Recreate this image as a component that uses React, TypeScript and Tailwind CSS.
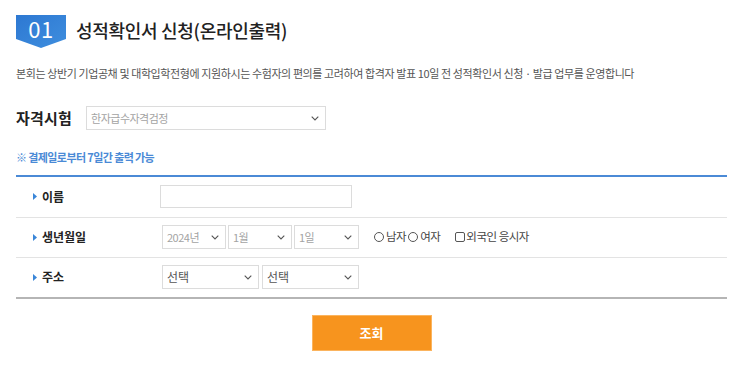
import { useState } from 'react'

const FONT = { fontFamily: '"Noto Sans CJK KR", "Noto Sans", sans-serif' }

function Chevron() {
  return (
    <svg width="8" height="5" viewBox="0 0 8 5" className="shrink-0">
      <path d="M0.7 0.7 L4 4 L7.3 0.7" fill="none" stroke="#555" strokeWidth="1.1" />
    </svg>
  )
}

function FakeSelect({ value, width, muted }: { value: string; width: string; muted?: boolean }) {
  return (
    <div
      className={`${width} h-[24px] flex items-center justify-between pl-[4px] pr-[6px] border border-[#dcdcdc] bg-white`}
    >
      <span className={muted ? 'text-[11px] text-[#a3a3a3] tracking-[-0.5px]' : 'text-[12px] text-[#555]'}>
        {value}
      </span>
      <Chevron />
    </div>
  )
}

function RowLabel({ children }: { children: string }) {
  return (
    <div className="w-[144px] shrink-0 flex items-center pl-[17px] gap-[5px]">
      <svg width="4" height="7" viewBox="0 0 4 7">
        <path d="M0 0 L4 3.5 L0 7 Z" fill="#3a86d8" />
      </svg>
      <span className="text-[12px] font-bold text-[#222]">{children}</span>
    </div>
  )
}

export default function App() {
  const [name, setName] = useState('')

  return (
    <div className="w-[743px] h-[373px] bg-white px-[16px] pt-[15px]" style={FONT}>
      {/* Title */}
      <div className="flex items-start gap-[10px]">
        <div
          className="w-[50px] h-[33px] flex justify-center pt-[1px] bg-gradient-to-br from-[#2d78d2] to-[#3f8ede] [clip-path:polygon(0_0,100%_0,100%_73%,50%_100%,0_73%)]"
        >
          <span className="text-[22px] leading-[24px] text-white font-normal tracking-[0.5px]">01</span>
        </div>
        <h1 className="text-[18px] leading-[33px] -mt-[1px] font-medium text-[#222] tracking-[-0.3px]">
          성적확인서 신청(온라인출력)
        </h1>
      </div>

      {/* Description */}
      <p className="mt-[17px] text-[11px] leading-[16px] text-[#555] tracking-[-0.4px]">
        본회는 상반기 기업공채 및 대학입학전형에 지원하시는 수험자의 편의를 고려하여 합격자 발표 10일 전 성적확인서 신청 · 발급 업무를 운영합니다
      </p>

      {/* Exam select */}
      <div className="mt-[25px] flex items-center gap-[14px]">
        <span className="text-[15px] font-bold text-[#222] tracking-[0.2px]">자격시험</span>
        <FakeSelect value="한자급수자격검정" width="w-[240px]" muted />
      </div>

      <p className="mt-[19px] text-[11px] font-bold text-[#4a8ad6] tracking-[-0.6px]">
        ※ 결제일로부터 7일간 출력 가능
      </p>

      {/* Form table */}
      <div className="mt-[9px] border-t-2 border-[#4b8ad6] border-b-2 border-b-[#b5b5b5]">
        <div className="h-[41px] flex items-center border-b border-[#e3e3e3]">
          <RowLabel>이름</RowLabel>
          <input
            value={name}
            onChange={e => setName(e.target.value)}
            className="w-[192px] h-[23px] border border-[#dcdcdc] outline-none px-[4px] text-[12px]"
          />
        </div>
        <div className="h-[40px] flex items-center border-b border-[#e3e3e3]">
          <RowLabel>생년월일</RowLabel>
          <div className="flex gap-[2px] ml-[2px]">
            <FakeSelect value="2024년" width="w-[64px]" muted />
            <FakeSelect value="1월" width="w-[64px]" muted />
            <FakeSelect value="1일" width="w-[65px]" muted />
          </div>
          <div className="ml-[15px] flex items-center text-[11.5px] text-[#444] tracking-[-0.5px]">
            <span className="w-[10px] h-[10px] rounded-full border border-[#555] mr-[2px]" />
            <span>남자</span>
            <span className="w-[10px] h-[10px] rounded-full border border-[#555] mx-[2px]" />
            <span>여자</span>
            <span className="ml-[15px] w-[10px] h-[10px] rounded-[2px] border border-[#555] mr-[1px]" />
            <span>외국인 응시자</span>
          </div>
        </div>
        <div className="h-[39px] flex items-center">
          <RowLabel>주소</RowLabel>
          <div className="flex gap-[3px] ml-[2px]">
            <FakeSelect value="선택" width="w-[97px]" />
            <FakeSelect value="선택" width="w-[97px]" />
          </div>
        </div>
      </div>

      {/* Submit */}
      <div className="flex justify-center mt-[16px]">
        <button className="w-[120px] h-[36px] bg-[#f7941e] text-white text-[13px] font-bold border border-[#fbb45e]">
          조회
        </button>
      </div>
    </div>
  )
}
